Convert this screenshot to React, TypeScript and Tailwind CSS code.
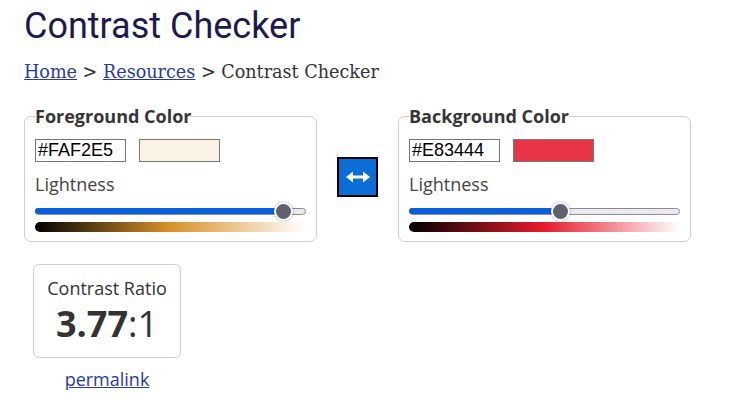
import React from "react";

function Slider({ value, mid }: { value: number; mid: string }) {
  const pos = 9 + value * (273 - 18);
  return (
    <div className="mt-[5px]">
      <div className="relative h-[20px]">
        <div className="absolute left-0 right-0 top-[7px] h-[7px] rounded-full border border-[#8c8c96] bg-[#e9e9ee]" />
        <div
          className="absolute left-0 top-[7px] h-[6px] rounded-full bg-[#0b60dd]"
          style={{ width: pos }}
        />
        <div
          className="absolute top-[1px] h-[19px] w-[19px] rounded-full border-2 border-white bg-[#60606f] shadow-[0_0_2px_rgba(0,0,0,0.4)]"
          style={{ left: pos - 9.5 }}
        />
      </div>
      <div
        className="mt-[1px] h-[10px] rounded-l-[5px]"
        style={{ background: `linear-gradient(to right, #000, ${mid}, #fff)` }}
      />
    </div>
  );
}

function ColorField({
  title,
  hex,
  value,
  mid,
}: {
  title: string;
  hex: string;
  value: number;
  mid: string;
}) {
  return (
    <fieldset className="w-[293px] shrink-0 rounded-[7px] border border-[#cfcfcf] px-[10px] pb-[9px]">
      <legend className="text-[18px] font-bold leading-[24px] text-[#363636]">{title}</legend>
      <div className="mt-[11px] flex items-center gap-[13px]">
        <div className="flex h-[23px] w-[91px] items-center border border-[#767676] px-[2px] font-['Liberation_Sans',Arial,sans-serif] text-[18px] text-black">
          {hex}
        </div>
        <div className="h-[23px] w-[81px] border border-[#777]" style={{ background: hex }} />
      </div>
      <div className="mt-[10px] text-[18px] leading-[24px] text-[#444]">Lightness</div>
      <Slider value={value} mid={mid} />
    </fieldset>
  );
}

export default function App() {
  return (
    <div className="min-h-[402px] bg-white px-6 pt-[6px] font-['Open_Sans',sans-serif]">
      <h1 className="font-['Roboto',sans-serif] text-[36px] leading-[40px] text-[#1c1b50]">
        Contrast Checker
      </h1>
      <nav className="mt-[14px] font-['DejaVu_Serif',serif] text-[17.6px] leading-[24px] text-[#333]">
        <a href="#" className="text-[#2b3a9e] underline">Home</a> &gt;{" "}
        <a href="#" className="text-[#2b3a9e] underline">Resources</a> &gt; Contrast Checker
      </nav>
      <div className="mt-[20px] flex items-start gap-[20px]">
        <ColorField title="Foreground Color" hex="#FAF2E5" value={0.94} mid="#d9922a" />
        <button className="mt-[53px] flex h-[40px] w-[41px] shrink-0 items-center justify-center border-2 border-black bg-[#0a6ed6]">
          <svg width="24" height="12" viewBox="0 0 24 12">
            <rect x="5" y="4.5" width="14" height="3" fill="#fff" />
            <path d="M0 6 L7 0.5 L7 11.5 Z" fill="#fff" />
            <path d="M24 6 L17 0.5 L17 11.5 Z" fill="#fff" />
          </svg>
        </button>
        <ColorField title="Background Color" hex="#E83444" value={0.56} mid="#e41d2c" />
      </div>
      <div className="ml-[9px] mt-[22px] flex w-[148px] flex-col items-center">
        <div className="flex h-[94px] w-full flex-col items-center rounded-[6px] border border-[#cfcfcf] pt-[11px] text-[#333]">
          <div className="text-[18px] leading-[24px]">Contrast Ratio</div>
          <div className="mt-[2px] text-[36px] leading-[44px]">
            <span className="font-bold">3.77</span>:1
          </div>
        </div>
        <a href="#" className="mt-[9px] text-[18px] leading-[24px] text-[#2b3a9e] underline">
          permalink
        </a>
      </div>
    </div>
  );
}
